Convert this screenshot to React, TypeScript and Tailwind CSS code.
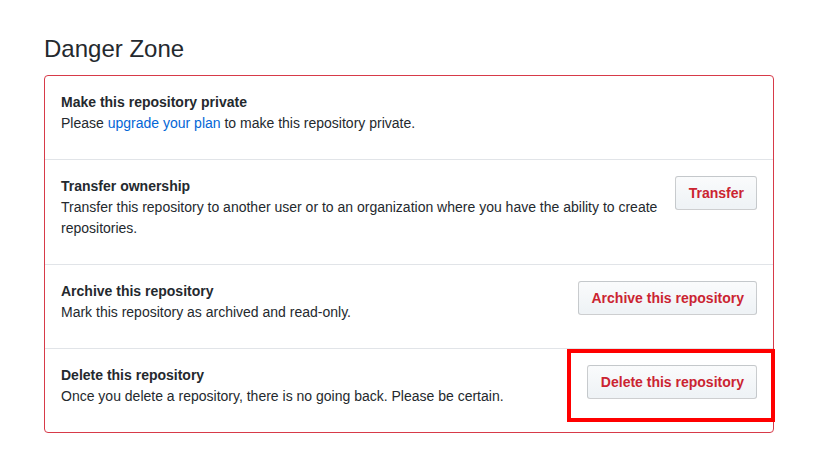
import React from "react";

const Btn = ({ children }: { children: React.ReactNode }) => (
  <button className="shrink-0 h-[34px] pl-[13px] pr-[12px] rounded-[3px] border border-[rgba(27,31,35,0.2)] bg-[linear-gradient(-180deg,#fafbfc_0%,#eff3f6_90%)] text-[14px] leading-[20px] font-bold text-[#cb2431] whitespace-nowrap">
    {children}
  </button>
);

const Row = ({
  title,
  children,
  button,
  last,
}: {
  title: string;
  children: React.ReactNode;
  button?: React.ReactNode;
  last?: boolean;
}) => (
  <div className={`flex gap-[16px] px-[16px] pt-[16px] pb-[25px] ${last ? "" : "border-b border-[#e1e4e8]"}`}>
    <div className="flex-1 min-w-0">
      <div className="font-bold text-[14px] leading-[21px]">{title}</div>
      <div className="text-[14px] leading-[21px]">{children}</div>
    </div>
    {button}
  </div>
);

export default function App() {
  return (
    <div
      className="w-[835px] h-[454px] bg-white text-[#24292e] pl-[44px] pr-[61px] pt-[31px]"
      style={{ fontFamily: '"Liberation Sans", Arial, sans-serif' }}
    >
      <h2 className="text-[24px] leading-[36px] font-normal mb-[8px]">Danger Zone</h2>
      <div className="border border-[#d73a49] rounded-[4px]">
        <Row title="Make this repository private">
          Please <span className="text-[#0366d6]">upgrade your plan</span> to make this repository private.
        </Row>
        <Row title="Transfer ownership" button={<Btn>Transfer</Btn>}>
          Transfer this repository to another user or to an organization where you have the ability to create repositories.
        </Row>
        <Row title="Archive this repository" button={<Btn>Archive this repository</Btn>}>
          Mark this repository as archived and read-only.
        </Row>
        <Row
          title="Delete this repository"
          last
          button={
            <div className="relative shrink-0">
              <Btn>Delete this repository</Btn>
              <div className="absolute left-[-20px] right-[-18px] top-[-16px] bottom-[-15px] border-[4px] border-[#ff0000] pointer-events-none" />
            </div>
          }
        >
          Once you delete a repository, there is no going back. Please be certain.
        </Row>
      </div>
    </div>
  );
}
